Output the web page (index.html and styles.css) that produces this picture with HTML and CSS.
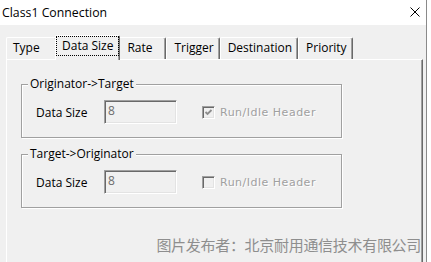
FILE: index.html
```html
<!DOCTYPE html>
<html>
<head>
<meta charset="utf-8">
<link rel="stylesheet" href="styles.css">
</head>
<body>
<div class="window">
  <div class="main">
    <div class="titlebar">
      <span class="title">Class1 Connection</span>
      <svg class="close" width="10" height="10" viewBox="0 0 10 10"><path d="M0.5 0.5 L9.5 9.5 M9.5 0.5 L0.5 9.5" stroke="#000" stroke-width="1" fill="none"/></svg>
    </div>
    <div class="body">
      <div class="tabs">
        <div class="tab tab-type">Type</div>
        <div class="tab tab-sel"><span class="focus">Data Size</span></div>
        <div class="tab tab-rate">Rate</div>
        <div class="tab">Trigger</div>
        <div class="tab">Destination</div>
        <div class="tab">Priority</div>
      </div>
      <div class="panel">
        <div class="group">
          <div class="group-title">Originator-&gt;Target</div>
          <div class="row">
            <span class="label">Data Size</span>
            <div class="field">8</div>
            <span class="check"><svg width="9" height="9" viewBox="0 0 9 9"><polyline points="1.5,4 3.5,6 7.5,2" stroke="#8d8d8d" stroke-width="1.8" fill="none"/></svg></span>
            <span class="check-label">Run/Idle Header</span>
          </div>
        </div>
        <div class="group group2">
          <div class="group-title">Target-&gt;Originator</div>
          <div class="row">
            <span class="label">Data Size</span>
            <div class="field">8</div>
            <span class="check"></span>
            <span class="check-label">Run/Idle Header</span>
          </div>
        </div>
        <div class="watermark">图片发布者：北京耐用通信技术有限公司</div>
      </div>
    </div>
  </div>
  <div class="edge"></div>
</div>
</body>
</html>
```
FILE: styles.css
```css
html, body {
  margin: 0;
  padding: 0;
  background: #fff;
}
.window {
  width: 431px;
  height: 262px;
  overflow: hidden;
  display: flex;
  font-family: "Open Sans", "Liberation Sans", sans-serif;
  font-size: 12px;
  color: #000;
}
.main {
  width: 426px;
  display: flex;
  flex-direction: column;
  background: #f0f0f0;
}
.edge {
  width: 1px;
  background: #8a8a8a;
}
.titlebar {
  height: 25px;
  background: #fff;
  display: flex;
  align-items: center;
  justify-content: space-between;
  padding-left: 2px;
  padding-right: 6px;
  flex-shrink: 0;
}
.title {
  font-size: 12.3px;
  margin-top: -1px;
}
.close {
  margin-top: -1px;
}
.body {
  padding: 10px 0 0 6px;
  flex: 1;
  display: flex;
  flex-direction: column;
}
.tabs {
  display: flex;
  align-items: flex-end;
  height: 24px;
}
.tab {
  box-sizing: border-box;
  height: 22px;
  line-height: 20px;
  padding: 0 5px 0 7px;
  border-top: 1px solid #fff;
  border-left: 1px solid #fff;
  border-right: 1px solid #696969;
  box-shadow: inset -1px 0 0 #a0a0a0;
  border-top-left-radius: 2px;
  border-top-right-radius: 2px;
  white-space: nowrap;
}
.tab-type {
  width: 51px;
  margin-right: -2px;
  padding-left: 6px;
}
.tab-rate {
  width: 48px;
  margin-left: -2px;
  padding-left: 8px;
}
.tab-sel {
  position: relative;
  z-index: 1;
  height: 25px;
  margin-bottom: -1px;
  padding: 0;
  background: #f0f0f0;
}
.focus {
  display: block;
  box-sizing: border-box;
  height: 20px;
  line-height: 18px;
  padding: 0 5px;
  border: 1px dotted #000;
}
.panel {
  box-sizing: border-box;
  width: 417px;
  flex: 1;
  border-top: 1px solid #fff;
  border-left: 1px solid #fff;
  border-right: 1px solid #696969;
  box-shadow: inset -1px 0 0 #a0a0a0;
  padding: 24px 0 0 14px;
}
.group {
  box-sizing: border-box;
  width: 321px;
  height: 54px;
  border: 1px solid #a0a0a0;
  box-shadow: 1px 1px 0 #fff, inset 1px 1px 0 #fff;
}
.group2 {
  margin-top: 16px;
}
.group-title {
  width: fit-content;
  margin: -9px 0 0 6px;
  padding: 0 2px;
  line-height: 16px;
  background: #f0f0f0;
}
.row {
  display: flex;
  align-items: center;
  margin-top: 8px;
  padding-left: 14px;
}
.label {
  width: 68px;
}
.field {
  box-sizing: border-box;
  width: 73px;
  height: 24px;
  border: 1px solid;
  border-color: #a0a0a0 #fff #fff #a0a0a0;
  box-shadow: inset 1px 1px 0 #696969, inset -1px -1px 0 #e3e3e3;
  padding: 2px 0 0 3px;
  line-height: 16px;
  color: #6d6d6d;
}
.check {
  box-sizing: border-box;
  width: 13px;
  height: 13px;
  margin-left: 25px;
  border: 1px solid;
  border-color: #a0a0a0 #fff #fff #a0a0a0;
  box-shadow: inset 1px 1px 0 #696969, inset -1px -1px 0 #e3e3e3;
  background: #f0f0f0;
  display: flex;
  align-items: center;
  justify-content: center;
}
.check-label {
  margin-left: 5px;
  font-family: "DejaVu Sans", sans-serif;
  font-size: 11px;
  letter-spacing: 0.5px;
  color: #a0a0a0;
  text-shadow: 1px 1px 0 #fff;
}
.watermark {
  margin-top: 28px;
  text-align: right;
  padding-right: 1px;
  font-family: "Noto Sans CJK SC", sans-serif;
  font-size: 15px;
  letter-spacing: -0.3px;
  line-height: 18px;
  color: #8e8e8e;
}
```
